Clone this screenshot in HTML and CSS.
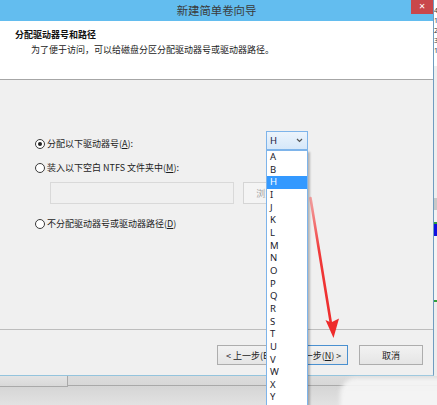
FILE: index.html
```html
<!DOCTYPE html>
<html lang="zh-CN">
<head>
<meta charset="utf-8">
<title>新建简单卷向导</title>
<link rel="stylesheet" href="styles.css">
</head>
<body>
<div class="screen">
  <div class="dialog">
    <div class="titlebar">
      <span class="title">新建简单卷向导</span>
      <span class="close">✕</span>
    </div>
    <div class="header">
      <div class="h-title">分配驱动器号和路径</div>
      <div class="h-sub">为了便于访问，可以给磁盘分区分配驱动器号或驱动器路径。</div>
    </div>
    <div class="body">
      <div class="row row-first">
        <label class="opt opt-wide"><span class="radio checked"></span>分配以下驱动器号(<u>A</u>):</label>
        <div class="combo"><span class="combo-val">H</span><svg class="chev" width="7" height="5" viewBox="0 0 7 5"><path d="M1 1 L3.5 3.5 L6 1" fill="none" stroke="#555" stroke-width="1.2"/></svg></div>
      </div>
      <div class="row"><label class="opt"><span class="radio"></span>装入以下空白 NTFS 文件夹中(<u>M</u>):</label></div>
      <div class="path-row">
        <div class="field"></div>
        <div class="btn btn-disabled">浏览(R)...</div>
      </div>
      <div class="row row-last"><label class="opt"><span class="radio"></span>不分配驱动器号或驱动器路径(<u>D</u>)</label></div>
    </div>
    <div class="footer">
      <div class="btn btn-back">&lt; 上一步(B)</div>
      <div class="btn btn-next">下一步(<u>N</u>) &gt;</div>
      <div class="btn btn-cancel">取消</div>
    </div>
  </div>
  <div class="edge">
    <div class="edge-top">4<br>1<br>2<br>3<br>1</div>
    <div class="edge-gray"></div>
    <div class="edge-dark"></div>
    <div class="edge-light"></div>
    <div class="edge-green"></div>
    <div class="edge-blue"></div>
    <div class="edge-white"></div>
    <div class="edge-green"></div>
    <div class="edge-rest"></div>
  </div>
</div>
<div class="taskbar">
  <div class="tab"></div>
  <div class="tab-line"></div>
</div>

<ul class="droplist">
  <li>A</li><li>B</li><li class="sel">H</li><li>I</li><li>J</li><li>K</li><li>L</li>
  <li>M</li><li>N</li><li>O</li><li>P</li><li>Q</li><li>R</li><li>S</li><li>T</li>
  <li>U</li><li>V</li><li>W</li><li>X</li><li>Y</li>
</ul>

<svg class="arrow" width="437" height="405" viewBox="0 0 437 405">
  <defs>
    <linearGradient id="fade" x1="0" y1="198" x2="0" y2="330" gradientUnits="userSpaceOnUse">
      <stop offset="0" stop-color="#f46a6a" stop-opacity="0.6"/>
      <stop offset="0.4" stop-color="#f03a3a"/>
      <stop offset="1" stop-color="#ee2b2b"/>
    </linearGradient>
  </defs>
  <path d="M310.5 198 L331 324" stroke="url(#fade)" stroke-width="2.6" fill="none" stroke-linecap="round"/>
  <path d="M333.5 338 L325.5 320 L331 322.5 L339 318.5 Z" fill="#ee2b2b"/>
</svg>

<div class="smudge"></div>
</body>
</html>
```

FILE: styles.css
```css
* { box-sizing: border-box; }

html, body {
  margin: 0;
  padding: 0;
}

body {
  width: 437px;
  height: 405px;
  overflow: hidden;
  position: relative;
  background: #dadada;
  font-family: "Noto Sans CJK SC", "Noto Sans", sans-serif;
  color: #1c1c1c;
}

u { text-decoration: underline; text-underline-offset: 1px; }

.screen {
  display: flex;
  height: 376px;
}

/* dialog window */
.dialog {
  width: 434px;
  display: flex;
  flex-direction: column;
  border-right: 1px solid #6f9cc0;
  border-bottom: 1px solid #94c4dd;
  background: #f0f0f0;
}

.titlebar {
  height: 21px;
  flex: none;
  display: flex;
  background: #63bdef;
}

.title {
  flex: 1;
  text-align: center;
  padding-left: 22px;
  font-size: 11.4px;
  line-height: 21px;
  color: #3a3a3a;
}

.close {
  width: 22px;
  height: 14px;
  background: #c9474b;
  color: #fff;
  font-size: 8px;
  line-height: 14px;
  text-align: center;
  font-family: "DejaVu Sans", sans-serif;
  font-weight: bold;
}

.header {
  height: 59px;
  flex: none;
  background: #fff;
  border-bottom: 1px solid #a6a6a6;
  padding-top: 8px;
}

.h-title {
  font-size: 9px;
  line-height: 12px;
  font-weight: bold;
  padding-left: 15px;
  color: #111;
}

.h-sub {
  font-size: 9px;
  line-height: 12px;
  margin-top: 3px;
  padding-left: 31px;
  color: #222;
}

.body {
  height: 249px;
  flex: none;
  padding-top: 51px;
  padding-left: 35px;
  display: flex;
  flex-direction: column;
}

.row {
  display: flex;
  align-items: center;
  height: 12px;
  margin-top: 12px;
}

.row-first {
  height: 19px;
  margin-top: 0;
  align-items: flex-start;
}

.row-first .opt { margin-top: 7px; }

.row-last { margin-top: 14px; }

.opt {
  display: flex;
  align-items: center;
  font-size: 9px;
  line-height: 12px;
  white-space: nowrap;
}

.opt-wide { width: 231px; }

.radio {
  width: 10px;
  height: 10px;
  border: 1px solid #3a3a3a;
  border-radius: 50%;
  background: #fff;
  margin-right: 2px;
  display: flex;
  align-items: center;
  justify-content: center;
  flex: none;
}

.radio.checked::after {
  content: "";
  width: 4px;
  height: 4px;
  border-radius: 50%;
  background: #222;
}

.combo {
  width: 42px;
  height: 19px;
  border: 1px solid #7eb4ea;
  background: linear-gradient(#ecf4fc, #d6e8fa);
  display: flex;
  align-items: center;
  padding-left: 3px;
  padding-right: 4px;
  justify-content: space-between;
  font-family: "Noto Sans", sans-serif;
  font-size: 9.5px;
}

.combo-val { color: #1a1a40; }

.path-row {
  display: flex;
  margin-top: 8px;
  padding-left: 15px;
  height: 22px;
}

.field {
  width: 184px;
  height: 22px;
  border: 1px solid #d9d9d9;
  background: #f0f0f0;
}

.btn {
  height: 20px;
  border: 1px solid #adadad;
  background: linear-gradient(#f2f2f2, #e5e5e5);
  font-size: 9px;
  display: flex;
  align-items: center;
  justify-content: center;
  white-space: nowrap;
  flex: none;
}

.btn-disabled {
  height: 22px;
  width: 64px;
  margin-left: 9px;
  border-color: #d5d5d5;
  background: #f4f4f4;
  color: #a3a3a3;
}

.footer {
  flex: 1;
  border-top: 1px solid #bdbdbd;
  display: flex;
  justify-content: flex-end;
  align-items: flex-start;
  padding-top: 15px;
  padding-right: 10px;
}

.btn-back { width: 64px; }

.btn-next {
  width: 66px;
  margin-left: 1px;
  border-color: #4a90d0;
  padding-left: 6px;
}

.btn-cancel {
  width: 64px;
  margin-left: 11px;
}

/* neighbouring window peeking out at the right */
.edge {
  width: 3px;
  display: flex;
  flex-direction: column;
  background: #f0f0f0;
  overflow: hidden;
}

.edge-top {
  height: 66px;
  background: #fff;
  font-size: 7px;
  line-height: 10px;
  padding-top: 6px;
  color: #333;
  font-family: "Noto Sans", sans-serif;
}

.edge-gray { height: 132px; background: #eeeeee; }
.edge-dark { height: 12px; background: #c8c8c8; }
.edge-light { height: 12px; background: #f2f2f2; }
.edge-green { height: 2px; background: #2f9f3a; }
.edge-blue { height: 12px; background: #1010e0; }
.edge-white { height: 64px; background: #f4f4f4; }
.edge-rest { flex: 1; background: #ededed; }

/* taskbar strip below the dialog */
.taskbar {
  height: 29px;
  position: relative;
  background: linear-gradient(#dcdcdc, #d6d6d6 40%, #e2e2e2);
}

.tab {
  width: 68px;
  height: 11px;
  border-right: 1px solid #a9a9a9;
  border-bottom: 1px solid #a9a9a9;
  background: linear-gradient(#e4e4e4, #d8d8d8);
}

.tab-line {
  position: absolute;
  left: 68px;
  right: 0;
  top: 9px;
  height: 1px;
  background: #a9a9a9;
}

/* open drop-down list of drive letters */
.droplist {
  position: absolute;
  left: 266px;
  top: 150px;
  width: 42px;
  height: 260px;
  margin: 0;
  padding: 0;
  list-style: none;
  background: #fff;
  border: 1px solid #7eb4ea;
  box-shadow: 2px 2px 2px rgba(0, 0, 0, 0.25);
  font-family: "Noto Sans", sans-serif;
  font-size: 9.5px;
  color: #1a1a2a;
}

.droplist li {
  height: 12.67px;
  line-height: 12.67px;
  padding-left: 3px;
}

.droplist li.sel {
  background: #3399ff;
  color: #fff;
}

.arrow {
  position: absolute;
  left: 0;
  top: 0;
  pointer-events: none;
}

.smudge {
  position: absolute;
  left: 340px;
  top: 378px;
  width: 110px;
  height: 34px;
  border-radius: 16px 10px 0 0;
  background: rgba(246, 246, 246, 0.9);
  filter: blur(2px);
}
```
